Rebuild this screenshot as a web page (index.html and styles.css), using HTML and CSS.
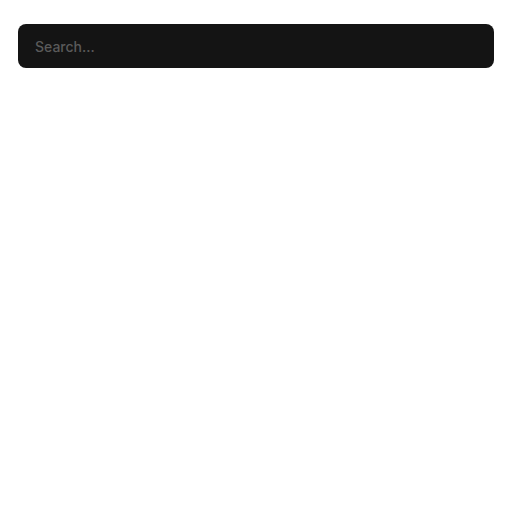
FILE: index.html
```html
<!DOCTYPE html>
<html>
<head>
<meta charset="utf-8">
<link rel="stylesheet" href="styles.css">
</head>
<body>
<div class="wrap">
  <input class="search" type="text" placeholder="Search...">
</div>
</body>
</html>
```
FILE: styles.css
```css
html, body { margin: 0; padding: 0; background: #fff; }
.wrap { padding: 24px 18px; }
.search {
  display: block;
  box-sizing: border-box;
  width: 100%;
  height: 44px;
  padding: 0 17px;
  border: none;
  border-radius: 8px;
  background: #141414;
  color: #ddd;
  font-family: Inter, "Noto Sans", sans-serif;
  font-size: 14px;
  font-weight: 500;
  outline: none;
}
.search::placeholder { color: #5a5a5a; }
```
